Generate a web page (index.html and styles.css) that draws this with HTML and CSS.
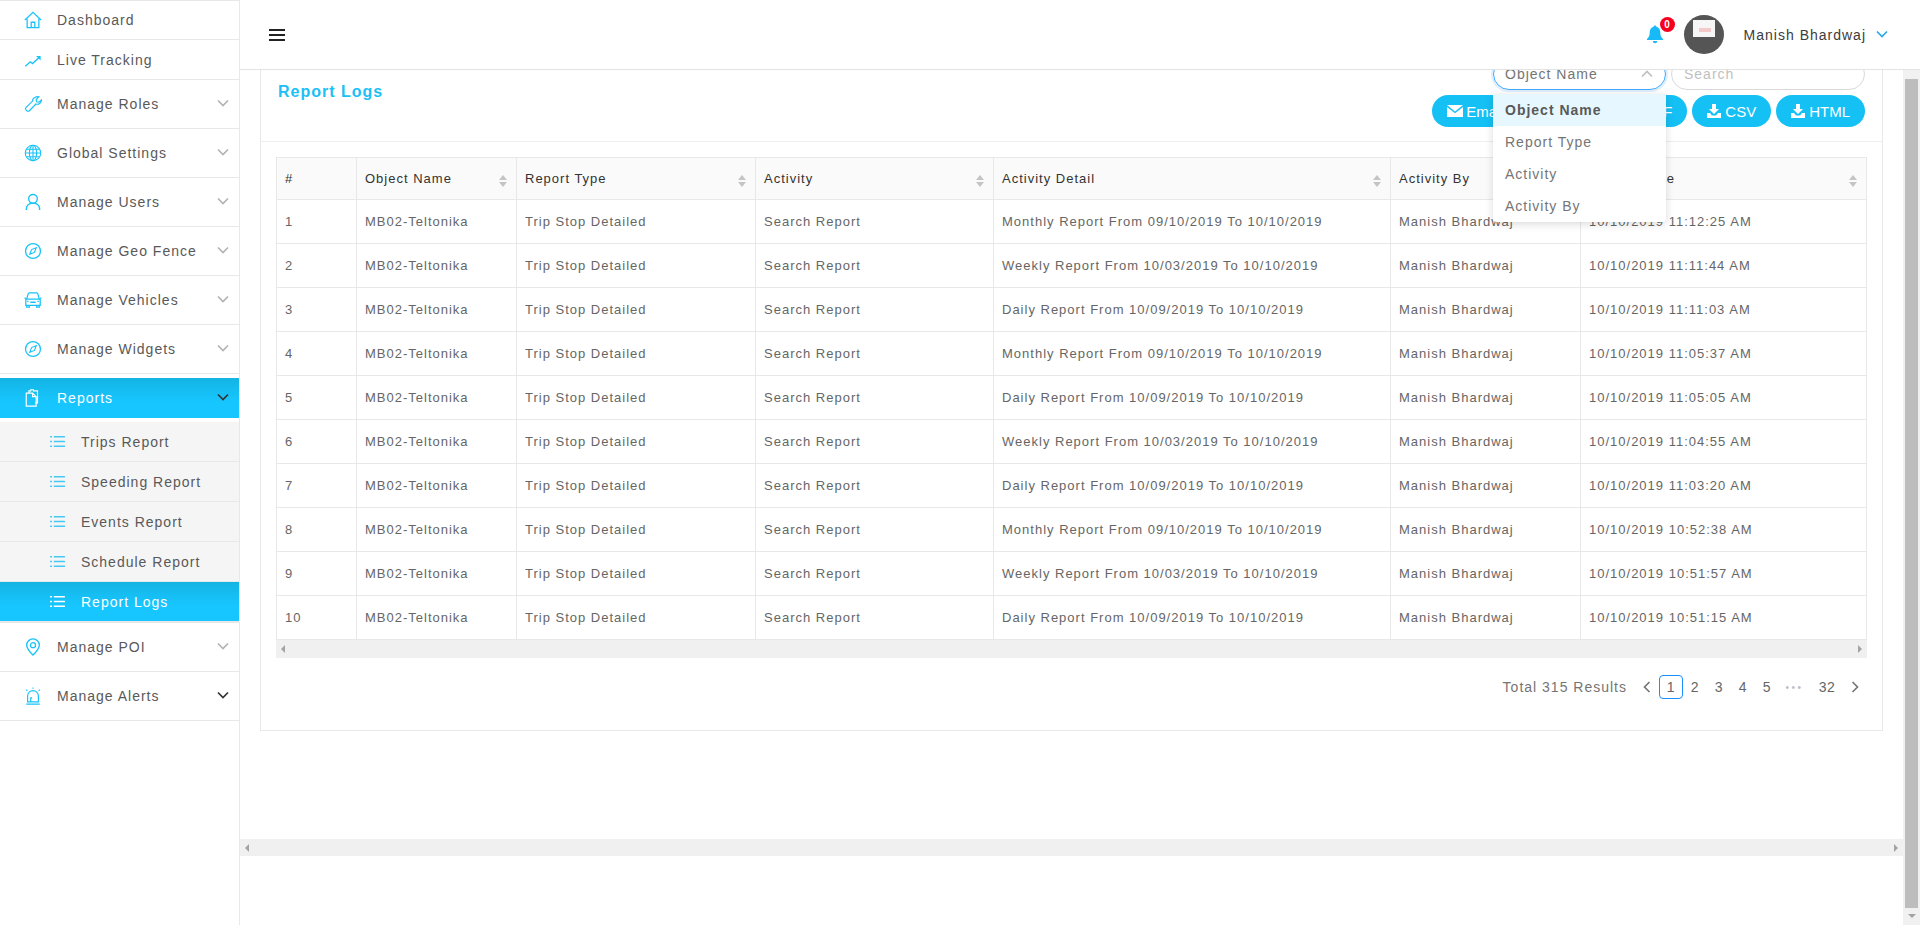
FILE: index.html
```html
<!DOCTYPE html>
<html lang="en">
<head>
    <meta charset="UTF-8">
    <title>Report Logs</title>
    <link rel="stylesheet" href="styles.css">
</head>
<body>
    <svg class="defs" width="0" height="0">
        <symbol id="chev" viewBox="0 0 12 8"><path d="M1 1.500l5 5 5-5" fill="none" stroke="currentColor" stroke-width="1.700"/></symbol>
        <symbol id="list" viewBox="0 0 16 14"><path d="M0 2h2M0 7h2M0 12h2M4 2h12M4 7h12M4 12h12" fill="none" stroke="currentColor" stroke-width="1.600"/></symbol>
        <symbol id="compass" viewBox="0 0 20 20"><circle cx="10" cy="10" r="8.300" fill="none" stroke="currentColor" stroke-width="1.400"/><path d="M13.600 6.400l-2 5.200-5.200 2 2-5.200z" fill="none" stroke="currentColor" stroke-width="1.200"/></symbol>
        <symbol id="download" viewBox="0 0 14 14"><path d="M5 0h4v5h3L7 10 2 5h3zM0 9h3l2 2.500h4l2-2.500h3v5H0z" fill="currentColor"/></symbol>
    </svg>

    <aside class="sidebar">
        <div class="nav-item short">
            <svg class="nav-icon" viewBox="0 0 20 20"><path d="M1 10l9-8.500 9 8.500M3.500 8.500V18.500h13V8.500M8 18.500v-6h4v6" fill="none" stroke="currentColor" stroke-width="1.400"/></svg>
            <span>Dashboard</span>
        </div>
        <div class="nav-item short">
            <svg class="nav-icon" viewBox="0 0 20 20"><path d="M1.500 17l5.500-5 2.500 2L17 7" fill="none" stroke="currentColor" stroke-width="1.500"/><path d="M13.500 5.500h5v5z" fill="currentColor"/></svg>
            <span>Live Tracking</span>
        </div>
        <div class="nav-item">
            <svg class="nav-icon" viewBox="0 0 20 20"><path d="M12.500 2.500a4.500 4.500 0 0 1 4-.5l-3 3 .5 2.500 2.500.5 3-2.500a4.800 4.800 0 0 1-6.300 4.500L6 17.500a2 2 0 0 1-3-.2l-.8-.8a2 2 0 0 1 .2-2.800L9.500 6.800a4.500 4.500 0 0 1 3-4.300z" fill="none" stroke="currentColor" stroke-width="1.300"/></svg>
            <span>Manage Roles</span>
            <svg class="chev"><use href="#chev"/></svg>
        </div>
        <div class="nav-item">
            <svg class="nav-icon" viewBox="0 0 20 20"><g fill="none" stroke="currentColor" stroke-width="1.200"><circle cx="10" cy="10" r="8.600"/><ellipse cx="10" cy="10" rx="4" ry="8.600"/><path d="M10 1.400v17.200M1.400 10h17.200M2.500 5.800h15M2.500 14.200h15"/></g></svg>
            <span>Global Settings</span>
            <svg class="chev"><use href="#chev"/></svg>
        </div>
        <div class="nav-item">
            <svg class="nav-icon" viewBox="0 0 20 20"><circle cx="10" cy="6.500" r="4.800" fill="none" stroke="currentColor" stroke-width="1.500"/><path d="M2.500 19c0-5 3-7.700 7.500-7.700s7.500 2.700 7.500 7.700" fill="none" stroke="currentColor" stroke-width="1.500"/></svg>
            <span>Manage Users</span>
            <svg class="chev"><use href="#chev"/></svg>
        </div>
        <div class="nav-item">
            <svg class="nav-icon"><use href="#compass"/></svg>
            <span>Manage Geo Fence</span>
            <svg class="chev"><use href="#chev"/></svg>
        </div>
        <div class="nav-item">
            <svg class="nav-icon" viewBox="0 0 20 20"><path d="M3 9l1.500-5.500c.2-.9.800-1.300 1.600-1.300h7.800c.8 0 1.400.4 1.600 1.300L17 9M2 9h16v7H2zM3 16v2h3v-2M14 16v2h3v-2M.500 8H2M18 8h1.500M7 12.500h6M3.500 11.500h1.500M15 11.500h1.500" fill="none" stroke="currentColor" stroke-width="1.400"/></svg>
            <span>Manage Vehicles</span>
            <svg class="chev"><use href="#chev"/></svg>
        </div>
        <div class="nav-item">
            <svg class="nav-icon"><use href="#compass"/></svg>
            <span>Manage Widgets</span>
            <svg class="chev"><use href="#chev"/></svg>
        </div>
        <div class="nav-item active short reports">
            <svg class="nav-icon" viewBox="0 0 20 20"><path d="M5.500 4.500V2h2V.800h3V2h4.500v13.500h-2.500M2.500 4.500h7l4 4v10.500h-11zM9.500 4.500v4h4" fill="none" stroke="currentColor" stroke-width="1.300"/></svg>
            <span>Reports</span>
            <svg class="chev dark"><use href="#chev"/></svg>
        </div>
        <div class="submenu">
            <div class="sub-item"><svg class="sub-icon"><use href="#list"/></svg><span>Trips Report</span></div>
            <div class="sub-item"><svg class="sub-icon"><use href="#list"/></svg><span>Speeding Report</span></div>
            <div class="sub-item"><svg class="sub-icon"><use href="#list"/></svg><span>Events Report</span></div>
            <div class="sub-item"><svg class="sub-icon"><use href="#list"/></svg><span>Schedule Report</span></div>
            <div class="sub-item active"><svg class="sub-icon"><use href="#list"/></svg><span>Report Logs</span></div>
        </div>
        <div class="nav-item">
            <svg class="nav-icon" viewBox="0 0 20 20"><path d="M10 19c-4-4-7-7.300-7-11a7 7 0 0 1 14 0c0 3.700-3 7-7 11z" fill="none" stroke="currentColor" stroke-width="1.500"/><circle cx="10" cy="8" r="2.800" fill="none" stroke="currentColor" stroke-width="1.400"/></svg>
            <span>Manage POI</span>
            <svg class="chev"><use href="#chev"/></svg>
        </div>
        <div class="nav-item">
            <svg class="nav-icon" viewBox="0 0 20 20"><path d="M4 16.500V10a6 6 0 0 1 12 0v6.500zM7.500 16v-4h1.500M2.500 19h15M10 .500v1.500M2.500 3l1.200 1.200M17.500 3l-1.200 1.200" fill="none" stroke="currentColor" stroke-width="1.300"/></svg>
            <span>Manage Alerts</span>
            <svg class="chev dark"><use href="#chev"/></svg>
        </div>
    </aside>

    <div class="main">
        <header class="topbar">
            <div class="hamburger"><i></i><i></i><i></i></div>
            <div class="user-box">
                <div class="bell">
                    <svg viewBox="0 0 18 20" width="18" height="20"><path d="M9 1.500c-.8 0-1.400.6-1.400 1.300C5 3.500 3.700 5.700 3.700 8.500c0 3.500-1 5-2.700 6.500v1h16v-1c-1.700-1.500-2.700-3-2.700-6.500 0-2.800-1.300-5-3.900-5.700 0-.7-.6-1.300-1.400-1.300zM6.800 17a2.200 2.200 0 0 0 4.400 0z" fill="currentColor"/></svg>
                    <span class="badge">0</span>
                </div>
                <div class="avatar"><div class="avatar-pic"><i></i></div></div>
                <span class="user-name">Manish Bhardwaj</span>
                <svg class="user-chev"><use href="#chev"/></svg>
            </div>
        </header>

        <div class="below-top">
            <div class="scroll-area">
                <div class="content">
                    <section class="card">
                        <div class="card-head">
                            <h2 class="card-title">Report Logs</h2>
                            <div class="tools">
                                <div class="filter-row">
                                    <div class="select-wrap">
                                        <div class="select">
                                            <span>Object Name</span>
                                            <svg class="select-chev"><use href="#chev"/></svg>
                                        </div>
                                        <ul class="menu">
                                            <li class="selected">Object Name</li>
                                            <li>Report Type</li>
                                            <li>Activity</li>
                                            <li>Activity By</li>
                                        </ul>
                                    </div>
                                    <div class="search">Search</div>
                                </div>
                                <div class="btn-row">
                                    <div class="btn btn-email">
                                        <svg viewBox="0 0 16 12" width="16" height="12"><path d="M0 0h16L8 6.500zM0 2l8 6.300L16 2v10H0z" fill="currentColor"/></svg>
                                        <span>Email</span>
                                    </div>
                                    <div class="btn btn-pdf">
                                        <svg class="dl"><use href="#download"/></svg>
                                        <span>PDF</span>
                                    </div>
                                    <div class="btn">
                                        <svg class="dl"><use href="#download"/></svg>
                                        <span>CSV</span>
                                    </div>
                                    <div class="btn">
                                        <svg class="dl"><use href="#download"/></svg>
                                        <span>HTML</span>
                                    </div>
                                </div>
                            </div>
                        </div>

                        <div class="card-body">
                            <table class="logs">
                                <colgroup>
                                    <col class="c-num"><col class="c-obj"><col class="c-type"><col class="c-act"><col class="c-detail"><col class="c-by"><col class="c-time">
                                </colgroup>
                                <thead>
                                    <tr>
                                        <th>#</th>
                                        <th class="sort">Object Name</th>
                                        <th class="sort">Report Type</th>
                                        <th class="sort">Activity</th>
                                        <th class="sort">Activity Detail</th>
                                        <th class="sort">Activity By</th>
                                        <th class="sort">Activity Time</th>
                                    </tr>
                                </thead>
                                <tbody>
                                    <tr><td>1</td><td>MB02-Teltonika</td><td>Trip Stop Detailed</td><td>Search Report</td><td>Monthly Report From 09/10/2019 To 10/10/2019</td><td>Manish Bhardwaj</td><td>10/10/2019 11:12:25 AM</td></tr>
                                    <tr><td>2</td><td>MB02-Teltonika</td><td>Trip Stop Detailed</td><td>Search Report</td><td>Weekly Report From 10/03/2019 To 10/10/2019</td><td>Manish Bhardwaj</td><td>10/10/2019 11:11:44 AM</td></tr>
                                    <tr><td>3</td><td>MB02-Teltonika</td><td>Trip Stop Detailed</td><td>Search Report</td><td>Daily Report From 10/09/2019 To 10/10/2019</td><td>Manish Bhardwaj</td><td>10/10/2019 11:11:03 AM</td></tr>
                                    <tr><td>4</td><td>MB02-Teltonika</td><td>Trip Stop Detailed</td><td>Search Report</td><td>Monthly Report From 09/10/2019 To 10/10/2019</td><td>Manish Bhardwaj</td><td>10/10/2019 11:05:37 AM</td></tr>
                                    <tr><td>5</td><td>MB02-Teltonika</td><td>Trip Stop Detailed</td><td>Search Report</td><td>Daily Report From 10/09/2019 To 10/10/2019</td><td>Manish Bhardwaj</td><td>10/10/2019 11:05:05 AM</td></tr>
                                    <tr><td>6</td><td>MB02-Teltonika</td><td>Trip Stop Detailed</td><td>Search Report</td><td>Weekly Report From 10/03/2019 To 10/10/2019</td><td>Manish Bhardwaj</td><td>10/10/2019 11:04:55 AM</td></tr>
                                    <tr><td>7</td><td>MB02-Teltonika</td><td>Trip Stop Detailed</td><td>Search Report</td><td>Daily Report From 10/09/2019 To 10/10/2019</td><td>Manish Bhardwaj</td><td>10/10/2019 11:03:20 AM</td></tr>
                                    <tr><td>8</td><td>MB02-Teltonika</td><td>Trip Stop Detailed</td><td>Search Report</td><td>Monthly Report From 09/10/2019 To 10/10/2019</td><td>Manish Bhardwaj</td><td>10/10/2019 10:52:38 AM</td></tr>
                                    <tr><td>9</td><td>MB02-Teltonika</td><td>Trip Stop Detailed</td><td>Search Report</td><td>Weekly Report From 10/03/2019 To 10/10/2019</td><td>Manish Bhardwaj</td><td>10/10/2019 10:51:57 AM</td></tr>
                                    <tr><td>10</td><td>MB02-Teltonika</td><td>Trip Stop Detailed</td><td>Search Report</td><td>Daily Report From 10/09/2019 To 10/10/2019</td><td>Manish Bhardwaj</td><td>10/10/2019 10:51:15 AM</td></tr>
                                </tbody>
                            </table>
                            <div class="hbar table-bar"><i class="arrow-left"></i><i class="arrow-right"></i></div>

                            <div class="pager">
                                <span class="total">Total 315 Results</span>
                                <span class="page"><svg class="page-prev"><use href="#chev"/></svg></span>
                                <span class="page current">1</span>
                                <span class="page">2</span>
                                <span class="page">3</span>
                                <span class="page">4</span>
                                <span class="page">5</span>
                                <span class="page dots">&bull;&bull;&bull;</span>
                                <span class="page">32</span>
                                <span class="page nav-next"><svg class="page-next"><use href="#chev"/></svg></span>
                            </div>
                        </div>
                    </section>
                </div>
                <div class="hbar page-bar"><i class="arrow-left"></i><i class="arrow-right"></i></div>
                <div class="page-foot"></div>
            </div>
            <div class="vbar"><div class="vbar-thumb"></div><i class="arrow-down"></i></div>
        </div>
    </div>
</body>
</html>
```
FILE: styles.css
```css
* {
    box-sizing: border-box;
}
html, body {
    height: 100%;
}
body {
    margin: 0;
    display: flex;
    height: 925px;
    overflow: hidden;
    background: #fff;
    font-family: "Liberation Sans", Arial, sans-serif;
    font-size: 14px;
    letter-spacing: 1px;
    color: #595959;
}
.defs {
    position: absolute;
}

/* sidebar */
.sidebar {
    width: 240px;
    flex: none;
    border-right: 1px solid #e8e8e8;
    border-top: 1px solid #e8e8e8;
}
.nav-item {
    display: flex;
    align-items: center;
    height: 49px;
    padding: 0 10px 0 24px;
    border-bottom: 1px solid #e8e8e8;
    color: #595959;
}
.nav-item.short {
    height: 39px;
}
.nav-item.short + .nav-item.short {
    height: 40px;
}
.nav-item span {
    margin-left: 15px;
    flex: 1;
}
.nav-icon {
    width: 18px;
    height: 18px;
    color: #17c3f9;
    flex: none;
}
.chev {
    width: 12px;
    height: 8px;
    color: #b3b3b3;
    margin-top: -3px;
    flex: none;
}
.chev.dark {
    color: #333;
}
.nav-item.active,
.sub-item.active {
    background: linear-gradient(#14b4e3, #17c6ff 60%);
    color: #fff;
}
.nav-item.active .nav-icon,
.sub-item.active .sub-icon {
    color: #fff;
}
.nav-item.reports {
    height: 40px;
    margin-top: 4px;
    border-bottom: 0;
}
.submenu {
    margin-top: 4px;
    border-bottom: 2px solid #e8e8e8;
    background: #f5f5f5;
}
.sub-item {
    display: flex;
    align-items: center;
    height: 40px;
    padding-left: 50px;
    border-bottom: 1px solid #e8e8e8;
}
.sub-item.active {
    height: 39px;
    border-bottom: 0;
}
.sub-icon {
    width: 15px;
    height: 13px;
    color: #45c9f5;
    flex: none;
}
.sub-item span {
    margin-left: 16px;
}

/* top bar */
.main {
    flex: 1;
    min-width: 0;
    display: flex;
    flex-direction: column;
}
.topbar {
    position: relative;
    z-index: 5;
    flex: none;
    display: flex;
    justify-content: space-between;
    align-items: center;
    height: 70px;
    background: #fff;
    border-bottom: 1px solid #e3e3e3;
    padding: 0 32px 0 29px;
}
.hamburger {
    width: 16px;
}
.hamburger i {
    display: block;
    height: 2px;
    margin: 3px 0;
    background: #222;
}
.user-box {
    display: flex;
    align-items: center;
}
.bell {
    position: relative;
    color: #17b9f7;
    height: 20px;
    margin: -2px 20px 0 0;
}
.badge {
    position: absolute;
    top: -7px;
    left: 14px;
    width: 15px;
    height: 15px;
    border-radius: 50%;
    background: #f5001f;
    color: #fff;
    font-size: 10px;
    font-weight: bold;
    line-height: 15px;
    text-align: center;
    letter-spacing: 0;
}
.avatar {
    display: flex;
    justify-content: center;
    width: 40px;
    height: 39px;
    padding-top: 5px;
    border-radius: 50%;
    background: #555;
}
.avatar-pic {
    position: relative;
    width: 22px;
    height: 17px;
    background: #f6f6f6;
}
.avatar-pic i {
    position: absolute;
    left: 6px;
    top: 8px;
    width: 12px;
    height: 4px;
    background: #f3c9c9;
}
.user-name {
    margin-left: 20px;
    color: #3c3c3c;
}
.user-chev {
    width: 12px;
    height: 8px;
    margin: -2px 0 0 10px;
    color: #2aa8e8;
}

/* content */
.below-top {
    flex: 1;
    min-height: 0;
    display: flex;
}
.scroll-area {
    flex: 1;
    min-width: 0;
    display: flex;
    flex-direction: column;
}
.content {
    height: 769px;
    padding: 0 20px;
}
.card {
    margin-top: -20px;
    border: 1px solid #e8e8e8;
    background: #fff;
}
.card-head {
    display: flex;
    justify-content: space-between;
    height: 91px;
    padding: 7px 17px 0 17px;
    border-bottom: 1px solid #eee;
}
.card-title {
    margin: 24px 0 0;
    font-size: 16px;
    line-height: 20px;
    font-weight: bold;
    color: #1cc0f6;
}
.filter-row {
    display: flex;
    justify-content: flex-end;
    gap: 5px;
}
.select-wrap {
    position: relative;
    width: 173px;
}
.select {
    display: flex;
    align-items: center;
    justify-content: space-between;
    height: 32px;
    padding: 0 12px 0 11px;
    border: 1px solid #40a9ff;
    border-radius: 16px;
    box-shadow: 0 0 0 2px rgba(24, 144, 255, 0.15);
    color: #757575;
}
.select-chev {
    width: 12px;
    height: 8px;
    color: #bfbfbf;
    transform: rotate(180deg);
}
.menu {
    position: absolute;
    top: 36px;
    left: 0;
    z-index: 3;
    width: 173px;
    margin: 0;
    padding: 0;
    list-style: none;
    background: #fff;
    border-radius: 0 0 4px 4px;
    box-shadow: 0 2px 8px rgba(0, 0, 0, 0.15);
}
.menu li {
    height: 32px;
    padding-left: 12px;
    line-height: 32px;
    color: #757575;
}
.menu li.selected {
    background: #e6f7ff;
    font-weight: bold;
    color: #595959;
}
.search {
    width: 194px;
    height: 32px;
    padding-left: 12px;
    border: 1px solid #d9d9d9;
    border-radius: 16px;
    line-height: 30px;
    color: #bfbfbf;
}
.btn-row {
    display: flex;
    justify-content: flex-end;
    gap: 5px;
    margin-top: 5px;
}
.btn {
    display: flex;
    align-items: center;
    gap: 4px;
    height: 32px;
    padding: 0 15px;
    border-radius: 16px;
    background: #15c0f5;
    color: #fff;
    font-size: 15px;
    letter-spacing: 0;
}
.btn-email {
    width: 89px;
    gap: 3px;
}
.btn-pdf {
    width: 161px;
    justify-content: flex-end;
}
.dl {
    width: 14px;
    height: 14px;
}
.card-body {
    padding: 15px 15px 31px;
}

/* table */
.logs {
    width: 1590px;
    table-layout: fixed;
    border-collapse: collapse;
    border-top: 1px solid #e8e8e8;
    border-left: 1px solid #e8e8e8;
    font-size: 13px;
}
.c-num { width: 80px; }
.c-obj { width: 160px; }
.c-type { width: 239px; }
.c-act { width: 238px; }
.c-detail { width: 397px; }
.c-by { width: 190px; }
.c-time { width: 286px; }
.logs th,
.logs td {
    padding: 0 8px;
    border-right: 1px solid #e8e8e8;
    border-bottom: 1px solid #e8e8e8;
    text-align: left;
    white-space: nowrap;
    overflow: hidden;
}
.logs th {
    height: 42px;
    background: #fafafa;
    font-weight: normal;
    color: #333;
}
.logs td {
    height: 44px;
    color: #666;
}
.logs th.sort {
    position: relative;
}
.logs th.sort::before,
.logs th.sort::after {
    content: "";
    position: absolute;
    right: 9px;
    border-left: 4px solid transparent;
    border-right: 4px solid transparent;
}
.logs th.sort::before {
    top: 17px;
    border-bottom: 5px solid #c4c4c4;
}
.logs th.sort::after {
    top: 24px;
    border-top: 5px solid #c4c4c4;
}

/* fake scrollbars */
.hbar {
    display: flex;
    justify-content: space-between;
    align-items: center;
    height: 18px;
    padding: 0 5px;
    background: #f0f0f0;
}
.page-bar {
    flex: none;
    height: 17px;
}
.page-foot {
    flex: 1;
}
.arrow-left {
    border-top: 4px solid transparent;
    border-bottom: 4px solid transparent;
    border-right: 4px solid #a3a3a3;
}
.arrow-right {
    border-top: 4px solid transparent;
    border-bottom: 4px solid transparent;
    border-left: 4px solid #a3a3a3;
}
.vbar {
    flex: none;
    width: 17px;
    display: flex;
    flex-direction: column;
    align-items: center;
    padding-top: 9px;
    background: #f1f1f1;
}
.vbar-thumb {
    width: 13px;
    height: 829px;
    background: #bdbdbd;
}
.arrow-down {
    margin-top: 6px;
    border-left: 4px solid transparent;
    border-right: 4px solid transparent;
    border-top: 4px solid #a3a3a3;
}

/* pagination */
.pager {
    display: flex;
    justify-content: flex-end;
    align-items: center;
    height: 24px;
    margin-top: 17px;
}
.total {
    margin-right: 8px;
    color: #757575;
}
.page {
    display: flex;
    justify-content: center;
    align-items: center;
    width: 24px;
    height: 24px;
    letter-spacing: 0.5px;
    color: #666;
}
.page-prev,
.page-next {
    width: 12px;
    height: 8px;
    color: #777;
}
.page-prev {
    transform: rotate(90deg);
}
.page-next {
    transform: rotate(-90deg);
}
.current {
    border: 1px solid #1890ff;
    border-radius: 4px;
}
.dots {
    width: 36px;
    padding-right: 5px;
    letter-spacing: 2.500px;
    color: #bdbdbd;
    font-size: 10px;
}
.nav-next {
    margin-left: 4px;
}
```
